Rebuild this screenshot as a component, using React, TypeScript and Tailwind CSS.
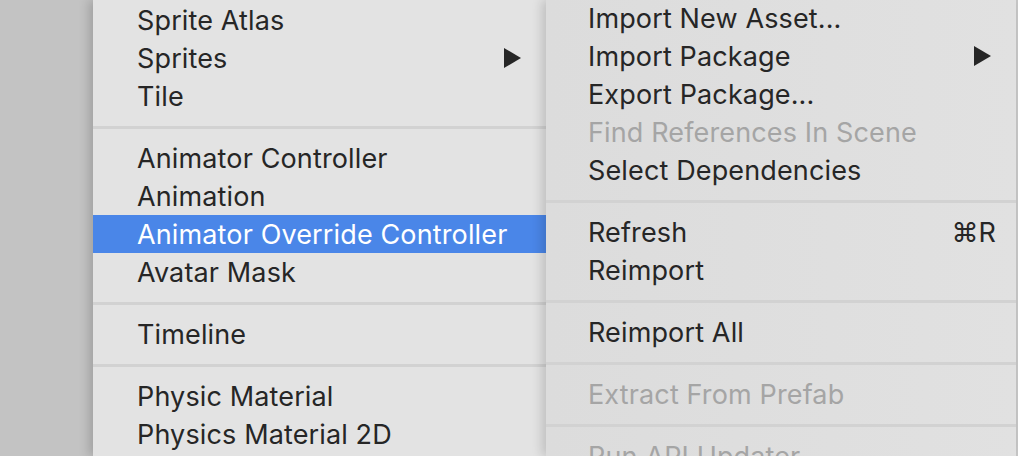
type Item =
  | { kind: 'item'; label: string; disabled?: boolean; active?: boolean; submenu?: boolean; shortcut?: string }
  | { kind: 'sep' };

const leftItems: Item[] = [
  { kind: 'item', label: 'Sprite Atlas' },
  { kind: 'item', label: 'Sprites', submenu: true },
  { kind: 'item', label: 'Tile' },
  { kind: 'sep' },
  { kind: 'item', label: 'Animator Controller' },
  { kind: 'item', label: 'Animation' },
  { kind: 'item', label: 'Animator Override Controller', active: true },
  { kind: 'item', label: 'Avatar Mask' },
  { kind: 'sep' },
  { kind: 'item', label: 'Timeline' },
  { kind: 'sep' },
  { kind: 'item', label: 'Physic Material' },
  { kind: 'item', label: 'Physics Material 2D' },
];

const rightItems: Item[] = [
  { kind: 'item', label: 'Import New Asset...' },
  { kind: 'item', label: 'Import Package', submenu: true },
  { kind: 'item', label: 'Export Package...' },
  { kind: 'item', label: 'Find References In Scene', disabled: true },
  { kind: 'item', label: 'Select Dependencies' },
  { kind: 'sep' },
  { kind: 'item', label: 'Refresh', shortcut: '⌘R' },
  { kind: 'item', label: 'Reimport' },
  { kind: 'sep' },
  { kind: 'item', label: 'Reimport All' },
  { kind: 'sep' },
  { kind: 'item', label: 'Extract From Prefab', disabled: true },
  { kind: 'sep' },
  { kind: 'item', label: 'Run API Updater...', disabled: true },
];

function Arrow({ light }: { light?: boolean }) {
  return (
    <svg width="17" height="20" viewBox="0 0 17 20" className="shrink-0">
      <polygon points="0,0 17,10 0,20" fill={light ? '#ffffff' : '#262626'} />
    </svg>
  );
}

function MenuRow({ item, inset }: { item: Item; inset: string }) {
  if (item.kind === 'sep') {
    return (
      <div className="h-[24px] pt-[11px]">
        <div className="h-[3px] bg-[#d2d2d2]" />
      </div>
    );
  }
  const color = item.active ? 'bg-[#4a86e8] text-white' : item.disabled ? 'text-[#a5a5a5]' : 'text-[#262626]';
  return (
    <div className={`h-[38px] flex items-center pr-[25px] ${inset} ${color}`}>
      <span className="flex-1 whitespace-nowrap">{item.label}</span>
      {item.submenu && <Arrow light={item.active} />}
      {item.shortcut && <span className="mr-[-5px] whitespace-nowrap tracking-normal">{item.shortcut}</span>}
    </div>
  );
}

export default function App() {
  return (
    <div
      className="flex w-[1018px] h-[456px] overflow-hidden bg-[#c3c3c3] text-[27px] leading-none tracking-[0.005em]"
      style={{ fontFamily: 'Inter, "Noto Sans", "DejaVu Sans", sans-serif' }}
    >
      <div className="w-[93px] shrink-0" />
      <div className="relative z-10 w-[453px] shrink-0 bg-[#e3e3e3] pt-px shadow-[-4px_0_10px_rgba(0,0,0,0.18)]">
        {leftItems.map((it, i) => (
          <MenuRow key={i} item={it} inset="pl-[44px]" />
        ))}
      </div>
      <div className="relative z-20 w-[470px] shrink-0 bg-gradient-to-r from-[#dcdcdc] to-[#e1e1e1] shadow-[-4px_0_10px_rgba(0,0,0,0.16)]">
        <div className="-mt-px">
          {rightItems.map((it, i) => (
            <MenuRow key={i} item={it} inset="pl-[42px]" />
          ))}
        </div>
      </div>
      <div className="w-[2px] shrink-0 bg-[#c8c8c8]" />
    </div>
  );
}
